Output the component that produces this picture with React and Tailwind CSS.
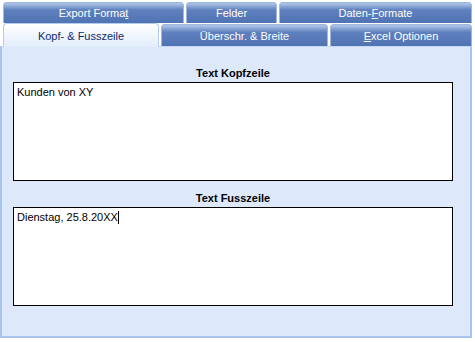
const topTabs = [
  { w: "w-[181px]", label: <>Export Forma<u>t</u></> },
  { w: "w-[91px]", label: "Felder" },
  { w: "w-[193px]", label: <>Daten-<u>F</u>ormate</> },
];

function Tab({ w, children }) {
  return (
    <div
      className={`${w} h-full flex items-center justify-center rounded-t-[4px] border border-b-0 border-[#9fb6dd] bg-gradient-to-b from-[#a9bfe4] from-[5%] via-[#5f80be] via-[35%] to-[#5073b3] text-white`}
    >
      {children}
    </div>
  );
}

export default function App() {
  return (
    <div
      className="w-[475px] h-[342px] bg-white text-[11px] leading-[14px] overflow-hidden"
      style={{ fontFamily: '"Liberation Sans", Arial, sans-serif' }}
    >
      {/* TAB ROW 1 */}
      <div className="flex gap-[2px] pl-[3px] pt-[2px] h-[23px]">
        {topTabs.map((t, i) => (
          <Tab key={i} w={t.w}>{t.label}</Tab>
        ))}
      </div>

      {/* TAB ROW 2 */}
      <div className="flex gap-[2px] pl-[3px] pt-[1px] h-[23px] items-end">
        <div className="relative z-10 w-[156px] h-[24px] -mb-[1px] flex items-center justify-center rounded-t-[4px] border border-b-0 border-[#b4cbee] bg-gradient-to-b from-[#ffffff] to-[#e2edfb] text-[#0d2a72]">
          Kopf- &amp; Fusszeile
        </div>
        <Tab w="w-[167px]">Überschr. &amp; Breite</Tab>
        <Tab w="w-[142px]"><span><u>E</u>xcel Optionen</span></Tab>
      </div>

      {/* PANEL */}
      <div className="w-[472px] h-[292px] bg-[#dde9fb] border-x-2 border-b-2 border-t border-[#a9c5ef] border-t-[#c7daf5] pl-[11px] pt-[19px]">
        <div className="w-[440px] flex flex-col">
          <div className="text-center font-bold text-black">Text Kopfzeile</div>
          <div className="mt-[2px] h-[99px] bg-white border border-black px-[3px] pt-[2px] text-black">
            Kunden von XY
          </div>
          <div className="mt-[10px] text-center font-bold text-black">Text Fusszeile</div>
          <div className="mt-[2px] h-[99px] bg-white border border-black px-[3px] pt-[2px] text-black">
            Dienstag, 25.8.20XX
            <span className="inline-block w-px h-[13px] bg-black align-[-3px]" />
          </div>
        </div>
      </div>
    </div>
  );
}
